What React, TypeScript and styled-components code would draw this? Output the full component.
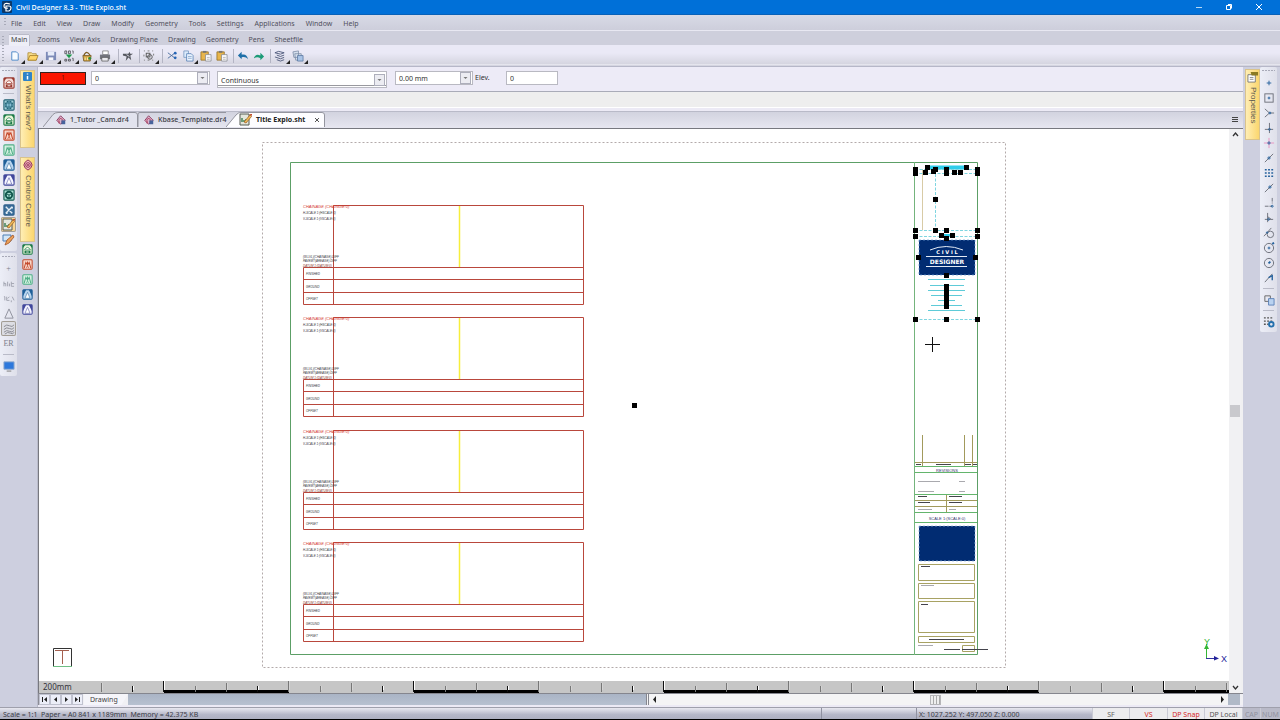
import React from "react";
import styled, { createGlobalStyle, css } from "styled-components";

const Global = createGlobalStyle`
  *, *::before, *::after { box-sizing: border-box; }
  body { margin: 0; background: #000; font-family: "Noto Sans", "Open Sans", sans-serif; font-size: 7px; line-height: 10px; color: #3c3c44; }
  button, input, select { font: inherit; color: inherit; margin: 0; padding: 0; border: 0; background: none; border-radius: 0; outline: none; }
  svg { display: block; flex: none; }
`;

const Window = styled.div`
  display: flex; flex-direction: column; height: 100vh; padding-bottom: 1px; background: #000;
`;
const TitleBar = styled.header`
  display: flex; align-items: center; height: 15px; flex: none; padding: 0 6px 0 2px;
  background: #0070d8; color: #fff; border-bottom: 1px solid #0861b8;
`;
const AppTitle = styled.h1`margin: 0 auto 0 4px; padding-top: 1px; font-size: 7px; font-weight: 500; line-height: 12px;`;
const WindowButton = styled.button`width: 30px; height: 14px; display: grid; place-items: center;`;

const MenuBar = styled.nav`
  display: flex; align-items: center; flex: none; height: 16px; padding-left: 4px;
  background: linear-gradient(#d8dae6, #cdcedb); border-bottom: 1px solid #e8e8f2;
`;
const MenuItem = styled.button`height: 14px; margin-right: 1px; padding: 2px 5px 0; color: #50505c; white-space: nowrap;`;
const HGrip = styled.span<{ $h: number }>`
  width: 2px; height: ${p => p.$h}px; flex: none;
  background: repeating-linear-gradient(#a8aab8 0 1px, transparent 1px 3px);
`;
const VGrip = styled.span`
  height: 1px; width: 13px; margin: 3px auto 4px; flex: none;
  background: repeating-linear-gradient(90deg, #a8aab8 0 2px, transparent 2px 3px);
`;

const Ribbon = styled.div`
  display: grid; grid-template-columns: 6px 1fr; flex: none; height: 36px; align-items: center;
  background: linear-gradient(#cecfdc 0 14px, #eae9f6 14px 22px, #d5d5e0 33px, #f4f4fa 34px, #b6b7c8 35px);
  padding-left: 2px;
`;
const RibbonTabs = styled.div`display: flex; height: 14px; gap: 6px; padding-left: 1px; align-items: flex-end;`;
const RibbonTab = styled.button<{ $on?: boolean }>`
  height: 11px; padding: 0 2px; color: #50505c; white-space: nowrap;
  ${p => p.$on && css`background: #eeeef7; box-shadow: 0 -1px #b9bac8, 1px 0 #b9bac8; color: #444; `}
`;
const Tools = styled.div`display: flex; align-items: center; height: 20px; margin-bottom: 1px;`;
const ToolButton = styled.button<{ $menu?: boolean }>`
  width: ${p => (p.$menu ? 18 : 16)}px; height: 18px; padding-left: 1px; position: relative; flex: none;
  ${p => p.$menu && css`
    &::after { content: ""; position: absolute; right: 1px; bottom: 1px; border: 2px solid; border-color: transparent #222 #222 transparent; }
  `}
`;
const ToolRule = styled.span`width: 1px; height: 14px; margin: 0 2px; background: #b4b5c4;`;

const Body = styled.div`display: flex; flex: 1; min-height: 0; background: #cdcfdf;`;
const SideColumn = styled.div<{ $w: number; $end?: boolean }>`
  width: ${p => p.$w}px; flex: none; display: flex; flex-direction: column;
  align-items: ${p => (p.$end ? "flex-end" : "flex-start")}; background: #cdcfdf;
`;
const IconStrip = styled.div`
  width: 17px; display: flex; flex-direction: column; align-items: center;
  background: linear-gradient(90deg, #eceef7, #dfe0ea); border-radius: 2px;
  & + & { margin-top: 2px; }
`;
const StripButton = styled.button<{ $on?: string }>`
  width: 15px; height: 15px; flex: none; display: grid; place-items: center; color: #7c7f8c;
  font-family: "Liberation Serif", serif; font-size: 8px;
  ${p => p.$on && css`background: ${p.$on}; box-shadow: inset 0 0 0 1px #a29d95; border-radius: 2px;`}
`;
const StripRule = styled.span`width: 11px; height: 1px; margin: 3px 0; background: #b9bbc8; flex: none;`;
const DockTab = styled.button<{ $h: number }>`
  width: 15px; height: ${p => p.$h}px; flex: none; display: flex; flex-direction: column; align-items: center; gap: 4px;
  padding-top: 1px; background: linear-gradient(90deg, #ffeeb4, #fbd66e); border: 1px solid #d9c38c;
  color: #5c5a50;
  span { writing-mode: vertical-rl; font-family: "Liberation Sans", sans-serif; font-size: 8px; line-height: 10px; white-space: nowrap; }
`;
const DockGap = styled.span<{ $h: number }>`height: ${p => p.$h}px; flex: none;`;

const Center = styled.main`flex: 1; min-width: 0; display: flex; flex-direction: column; border-left: 1px solid #b9bbca; background: #eceaf5;`;
const PropertyBar = styled.form`
  display: flex; align-items: center; height: 25px; flex: none; padding-left: 2px; background: #edebf7;
  border-bottom: 1px solid #a9abb8; color: #333;
`;
const ColourButton = styled.button`width: 46px; height: 13px; background: #fb1500; border: 1px solid #33201c; color: #7a1408; margin-bottom: 2px;`;
const Picker = styled.span<{ $w: number; $ml: number; $low?: boolean }>`
  display: grid; grid-template-columns: 1fr 12px; align-items: center; width: ${p => p.$w}px; height: ${p => (p.$low ? 17 : 14)}px;
  margin-left: ${p => p.$ml}px; margin-top: ${p => (p.$low ? 1 : 0)}px; margin-bottom: ${p => (p.$low ? 0 : 2)}px;
  background: #fff; border: 1px solid #b9b9c2;
  select { appearance: none; height: 12px; line-height: 12px; padding: 1px 0 0 3px; grid-row: 1; grid-column: 1 / 3; width: 100%;
    ${p => p.$low && css`border-bottom: 1px solid #99999f;`} }
  svg { grid-row: 1; grid-column: 2; pointer-events: none; }
`;
const ElevLabel = styled.label`margin: 0 0 2px 2px; width: 31px;`;
const ElevInput = styled.input`width: 52px; height: 14px; margin-bottom: 2px; padding-left: 3px; background: #fff; border: 1px solid #b9b9c2;`;
const InfoBar = styled.div`height: 16px; flex: none; margin-bottom: 3px; background: #eeeeee; border-bottom: 1px solid #fff;`;

const DocTabs = styled.div`
  display: flex; height: 18px; flex: none; align-items: flex-end; padding: 0 4px 1px 5px; font-family: "Open Sans", sans-serif;
  background: linear-gradient(#d2d3df, #e6e6f0); border-top: 1px solid #b9bac8; border-bottom: 1px solid #77787f;
`;
const DocTab = styled.button<{ $w: number; $pad: number; $on?: boolean }>`
  position: relative; width: ${p => p.$w}px; height: 15px; display: flex; align-items: center; gap: 4px; padding-left: ${p => p.$pad}px; white-space: nowrap;
  font-weight: ${p => (p.$on ? 700 : 600)}; color: ${p => (p.$on ? "#222" : "#44444c")};
  > svg:first-child { position: absolute; inset: 0; }
  > *:not(:first-child) { position: relative; }
  > span { padding-top: 1px; }
`;
const TabsMenu = styled.button`margin: 0 0 4px auto;`;

const CanvasArea = styled.div`
  flex: 1; min-height: 0; display: grid; grid-template-columns: 1fr 12px; grid-template-rows: 1fr 12px;
  border-left: 1px solid #77787f; padding-right: 2px; background: #f0f0f2;
`;
const Drawing = styled.svg`width: 100%; height: 100%; min-height: 0; background: #fff; font-family: "Liberation Sans", sans-serif;`;
const VScroll = styled.div`grid-row: 1 / 3; grid-column: 2; display: flex; flex-direction: column; justify-content: space-between; align-items: center; background: #f1f1f3;`;
const Arrow = styled.button`width: 11px; height: 11px; display: grid; place-items: center; flex: none;`;
const VThumb = styled.span`width: 10px; height: 12px; background: #c9c9cd; flex: none;`;
const Ruler = styled.svg`width: 100%; height: 12px; background: #c6c6c6;`;

const SheetBar = styled.div`
  display: flex; height: 12px; flex: none; background: #f0f0f4; border-left: 1px solid #8b8c96; border-top: 1px solid #85868e;
`;
const SheetNav = styled.button`width: 11px; height: 11px; display: grid; place-items: center; background: #eceef8; border: 1px solid #c0c2cf;`;
const SheetTab = styled.button`
  width: 44px; height: 11px; margin-left: 1px; text-align: left; padding-left: 6px; background: #f5f5fa; clip-path: polygon(0 0, 100% 0, 85% 100%, 0 100%); color: #444;
`;
const SheetSpace = styled.div`flex: 518; background: linear-gradient(#aab4c5, #b7c1d0);`;
const HScroll = styled.div`flex: 580; display: flex; align-items: center; border-left: 3px double #85868e; background: #f4f4f5;`;
const Track = styled.span<{ $part: number }>`flex: ${p => p.$part};`;
const HThumb = styled.span`width: 11px; height: 10px; border: 1px solid #b5b5b8; background: repeating-linear-gradient(90deg, #eee 0 2px, #aaa 2px 3px);`;
const Corner = styled.span`width: 12px; background: #b0b9c7; margin-right: 3px;`;

const StatusBar = styled.footer`
  display: flex; align-items: center; height: 12px; flex: none; padding-left: 3px; color: #3a3b46; white-space: nowrap;
  background: linear-gradient(#e8e8f0, #b5b7c8 60%, #adafc0); border-top: 1px solid #9fa0ac;
`;
const StatusPane = styled.span<{ $w?: number }>`
  ${p => (p.$w ? css`width: ${p.$w}px; padding-left: 2px; border-left: 1px solid #8f91a0;` : css`flex: 1;`)}
  height: 11px; line-height: 13px; flex-shrink: 0;
`;
const StatusToggle = styled.button<{ $w: number; $tone: string; $dim?: boolean }>`
  width: ${p => p.$w}px; height: 11px; padding-top: 1px; flex: none; overflow: hidden; color: ${p => p.$tone}; line-height: 12px;
  background: ${p => (p.$dim ? "#b9bac8" : "#ececee")}; border-left: 1px solid #c9cad4;
`;

/* ---------- icons ---------- */
const Ico = ({ children, s = 13 }: { children: React.ReactNode; s?: number }) => (
  <svg width={s} height={s} viewBox="0 0 13 13" fill="none" aria-hidden="true">{children}</svg>
);

const toolIcons: Record<string, React.ReactNode> = {
  New: <path d="M3 2h5l2 2v7H3z" fill="#f6fbff" stroke="#4a86c5" />,
  Open: <><path d="M1 3h4l1 1h4v7H1z" fill="#f7dd8c" stroke="#a8842c" strokeWidth=".8" /><path d="M1 11l2-5h9l-2 5z" fill="#ffd668" stroke="#9c7620" strokeWidth=".8" /></>,
  Save: <><path d="M1 2h11v9H1z" fill="#7d8bb8" /><path d="M3 2h7v4H3z" fill="#e7ecf9" /><path d="M4 8h5v3H4z" fill="#f8f8fb" /></>,
  Export: <><path d="M2 1h2v3H2zM6 1h2v3H6zM10 1h1v3M2 10h2v2H2zM6 10h2v2H6zM10 9h1v3" stroke="#3b3b40" strokeWidth=".8" /><path d="M3 5h7L6.500 9z" fill="#1d9a4b" /></>,
  Package: <><path d="M2 6h9l-1 6H3z" fill="#d0a444" stroke="#6b4f1b" strokeWidth=".8" /><path d="M3 6q3-7 7 0" stroke="#7c5a20" strokeWidth="1.300" /><path d="M4.500 8v3M7 8v3" stroke="#fff0b5" /><circle cx="9.500" cy="9" r="1.500" fill="#2c8e43" /></>,
  Print: <><path d="M4 1h6v4H4z" fill="#fff" stroke="#666" strokeWidth=".7" /><path d="M1 5h11v5H1z" fill="#73757d" /><path d="M3 8h7v4H3z" fill="#e9e9ed" stroke="#444" strokeWidth=".7" /></>,
  Find: <><path d="M1 4h6l1-2 1 2h3l-3 2 1 5-3-3-3 4 1-5-4-1z" fill="#55575f" /><path d="M5 5l3 2" stroke="#e3e3ee" /></>,
  Group: <><rect x="3.500" y="3.500" width="4" height="4" stroke="#555" /><circle cx="7.500" cy="7.500" r="2.500" stroke="#555" /><path d="M1 1h1M5 1h2M10 1h1M1 11h1M5 11h2M10 11h1M1 5v2M11.500 4v2" stroke="#777" /></>,
  Cut: <><path d="M2 3l8 6M2 9l8-6" stroke="#4a6d9e" /><circle cx="10" cy="3.500" r="1.500" fill="#2765b5" /><circle cx="10" cy="8.500" r="1.500" fill="#2765b5" /></>,
  Copy: <><path d="M2 1h5v7H2z" fill="#dcebfb" stroke="#6e91bd" strokeWidth=".8" /><path d="M5 4h5l2 2v6H5z" fill="#eaf4ff" stroke="#4b78b0" strokeWidth=".8" /><path d="M6.500 7h4M6.500 9h4" stroke="#6e91bd" strokeWidth=".7" /></>,
  Paste: <><path d="M1 2h8v9H1z" fill="#e8b54b" stroke="#8f6a20" strokeWidth=".8" /><path d="M3 1h4v2H3z" fill="#777" /><path d="M6 5h6v7H6z" fill="#fbfbfd" stroke="#85878f" strokeWidth=".8" /><path d="M7.500 8h3M7.500 10h3" stroke="#999" strokeWidth=".7" /></>,
  Undo: <path d="M1 6l4-4v3c4-1 6 1 7 5-2-2-4-3-7-2v2z" fill="#1f6fa8" />,
  Redo: <path d="M12 7L8 3v3c-4-2-6 0-7 3 2-1 4-2 7 0v2z" fill="#1c9b78" />,
  Layers: <><path d="M5 1.500L11 3 7 4.500 1 3zM3 5.500l4 1.500 4-1.500M1 7.500l6 2 4-1.500M3 10.500L7 12l4-1.500" stroke="#4f5a7c" /></>,
  Sheets: <><path d="M1 2l6-1v7H2zM3 4h7v7H4z" fill="#d6e0ee" stroke="#7888a3" strokeWidth=".8" /><path d="M6 6h6v6H6z" fill="#a9c4e6" stroke="#54739f" strokeWidth=".8" /></>,
};

const Badge = ({ c, bg, k, s = 12 }: { c: string; bg: string; k: number; s?: number }) => (
  <Ico s={s}>
    <rect x="1" y="1" width="11" height="11" rx="1" fill={bg} stroke={c} strokeWidth="1.200" />
    {k === 0 && <><circle cx="6.500" cy="6.500" r="4.500" fill={c} /><path d="M2 6.500h9M6.500 2v9M4 3q2 3.500 0 7M9 3q-2 3.500 0 7" stroke="#9ad2e8" strokeWidth=".8" /></>}
    {k === 1 && <><path d="M1 1h3L1 5zM12 1H9l3 4z" fill={c} /><path d="M3 7q3.500-6 7 0z" fill="#fff" stroke={c} strokeWidth=".8" /><path d="M3 8h7v3H3z" fill={c} /><path d="M5 9.500h3" stroke="#fff" /></>}
    {k === 2 && <><path d="M2.500 11L4.500 4l2 3V3M10.500 11L8.500 4l-2 3" stroke={c} strokeWidth="1.200" /><path d="M5 11l1.500-3L8 11" stroke={c} strokeWidth=".8" /></>}
    {k === 3 && <><path d="M1 1h4L1 9zM12 1H8l4 8z" fill={c} /><path d="M3.500 11L6.500 4l3 7z" fill="#fff" stroke={c} strokeWidth=".6" /></>}
    {k === 4 && <><circle cx="6.500" cy="6.500" r="3.500" stroke={c} strokeWidth="2" /><path d="M6.500 6.500v4M6.500 6.500L3 5M6.500 6.500L10 5" stroke={c} /></>}
    {k === 5 && <path d="M3 10l7-7M3 3l7 7M3 10h2M10 3v2" stroke="#e4edf5" strokeWidth="1.500" />}
  </Ico>
);
const Edit = () => (
  <Ico s={13}><path d="M1 1h9v11H1z" fill="#e3e6dc" stroke="#545a52" /><path d="M3 9V5M5 9V7M7 9V6" stroke="#1b6d38" strokeWidth="1.200" /><path d="M5 9l6-7 1.500 1.500L7 10z" fill="#f0bd59" stroke="#99541e" strokeWidth=".7" /><path d="M10 1h3v2" fill="#c4492a" /></Ico>
);
const Sketch = () => (
  <Ico s={13}><path d="M1 2h8v6H1z" fill="#d3e6f7" stroke="#4d7fb4" /><path d="M3 12l2-5 6-5 1 2-5 6z" fill="#e9a05a" stroke="#a45422" strokeWidth=".8" /></Ico>
);
const House = () => (
  <Ico s={10}><path d="M1 7l5-6 6 6-6 5z" fill="#d8b4cc" stroke="#8d3b62" strokeWidth="1.200" /><path d="M3 7l3-3 3 3M4 7v4M8 7v4" stroke="#b03050" strokeWidth="1.200" /><path d="M7 7h5v5H7z" fill="#47639c" /></Ico>
);
const Spiral = () => (
  <Ico s={12}><path d="M6.500 1q4 2 4.500 5.500-.5 3.500-4.500 5.500-4-2-4.500-5.500Q2.500 3 6.500 1z" fill="#f5b7bd" stroke="#8d2d56" /><circle cx="6.500" cy="6.500" r="2.500" stroke="#8d2d56" /><circle cx="6.500" cy="6.500" r="1" fill="#8d2d56" /></Ico>
);

const mini: Array<[string, string, number]> = [["#1c7a48", "#e9f6d8", 1], ["#c44a2c", "#f8d8cc", 2], ["#4fae86", "#d5f1e2", 2], ["#1f5f98", "#b8d4ee", 3], ["#41479c", "#f3f3ff", 3]];

const snaps: Array<[string, React.ReactNode]> = [
  ["Point", <path d="M6.500 4v5M4 6.500h5" />],
  ["Node", <><rect x="2" y="2" width="9" height="9" stroke="#6b6f78" /><circle cx="6.500" cy="6.500" r="1" /></>],
  ["Intersection", <><path d="M2 2l5 4.500L2 11M7 6.500h5" stroke="#6b6f78" /><circle cx="7.500" cy="6.500" r="1" /></>],
  ["Perpendicular", <><path d="M7 1v11M2 8h9" stroke="#6b6f78" /><circle cx="7" cy="8" r="1" /></>],
  ["Cross", <><path d="M6.500 1v11M1 6.500h11" stroke="#e892c0" /><circle cx="6.500" cy="6.500" r="1.200" /></>],
  ["Midpoint", <><path d="M2 11l9-9" stroke="#6b6f78" /><circle cx="6.500" cy="6.500" r="1.200" /></>],
  ["Grid", <path d="M2 3h9M2 6.500h9M2 10h9" strokeDasharray="2 1.500" strokeWidth="1.800" />],
  ["Nearest", <><path d="M2 11l9-9" stroke="#6b6f78" /><circle cx="7.500" cy="5.500" r="1.200" /></>],
  ["Corner", <><path d="M2 10h8M10 1v6" stroke="#6b6f78" strokeDasharray="4 1" /><circle cx="10" cy="10" r="1" /></>],
  ["Base", <><path d="M5 1v10M2 8h9M5 5l4 3" stroke="#6b6f78" /><circle cx="6" cy="8" r="1" /></>],
  ["Tangent", <><circle cx="8" cy="8" r="3.500" stroke="#6b6f78" /><path d="M1 10l8-9" stroke="#6b6f78" /><circle cx="4.500" cy="6" r=".8" /></>],
  ["Quadrant", <><circle cx="6.500" cy="6.500" r="5" stroke="#6b6f78" /><circle cx="6.500" cy="6.500" r="1" /><path d="M10 2l2-1" strokeWidth="2" /></>],
  ["Centre", <><circle cx="6.500" cy="6.500" r="5" stroke="#6b6f78" /><path d="M6 7l2-2" strokeWidth="2" /></>],
  ["Line end", <><path d="M2 11l8-9" stroke="#6b6f78" /><path d="M6 6l4-2v5" strokeWidth="1.500" /></>],
];

/* ---------- drawing ---------- */
const Profile = ({ y }: { y: number }) => (
  <g>
    <path d={`M459.500 ${y}v62`} stroke="#f7ee3c" strokeWidth="1.500" />
    <path d={`M333.500 ${y}H583.500V${y + 99}H303.500V${y + 62}H583.500M333.500 ${y}V${y + 99}M303.500 ${y + 74}H583.500M303.500 ${y + 87}H583.500`} stroke="#b9473c" />
    <g fontStyle="italic" fontSize="4" fill="#d43a30">
      <text x="303" y={y + 2}>CHAINAGE (CHAINGE:0)</text>
    </g>
    <g fontStyle="italic" fontSize="3" fill="#33333a">
      <text x="303" y={y + 8}>H-SCALE 1:(HSCALE:0)</text>
      <text x="303" y={y + 14}>V-SCALE 1:(VSCALE:0)</text>
      <text x="303" y={y + 52}>(W.LVL)(CHAINAGE).DIFF</text>
      <text x="303" y={y + 56}>PAVEMT(AREAGE) DIFF</text>
      <text x="303" y={y + 61} fill="#80332d">DATUM 1:(DATUM:0)</text>
      <text x="306" y={y + 69}>FINISHED</text>
      <text x="306" y={y + 82}>GROUND</text>
      <text x="306" y={y + 94}>OFFSET</text>
    </g>
  </g>
);

const handles = [[915, 169], [977, 169], [915, 173], [977, 173], [946, 169], [946, 173], [927, 167], [966, 167], [925, 172], [933, 171], [935, 169], [954, 172], [960, 172], [935, 199], [935, 230], [946, 230], [915, 230], [977, 230], [915, 236], [977, 236], [941, 235], [952, 235], [946, 238], [918, 257], [975, 257], [946, 275], [946, 286], [946, 291], [946, 296], [946, 301], [946, 306], [915, 319], [946, 319], [977, 319], [634, 405]];
const addressLines = [[928, 965, 279], [930, 964, 285], [928, 965, 290], [931, 962, 295], [938, 955, 300], [931, 962, 305], [928, 965, 310]];
const notes = [[916, 921, 464], [936, 951, 464], [965, 971, 464], [973, 977, 464], [918, 927, 496], [949, 962, 496], [918, 930, 502], [949, 962, 502], [921, 930, 566], [921, 928, 604], [929, 964, 639], [944, 960, 649], [962, 988, 649]];
const faint = [[918, 940, 481], [959, 965, 481], [918, 934, 491], [959, 965, 491], [918, 932, 509], [949, 956, 509], [921, 934, 585], [918, 933, 645]];
const lines = (list: number[][]) => list.map(([a, b, y]) => `M${a} ${y}.500H${b}`).join("");

const Sheet = () => (
  <Drawing viewBox="39 129 1190 552" role="img" aria-label="Title sheet drawing" fill="none">
    <rect x="262.500" y="142.500" width="743" height="525" stroke="#b3aaaa" strokeDasharray="2 2" />
    <path d="M290.500 162.500H977.500V654.500H290.500z" stroke="#5c9f66" />
    <path d="M914.500 162V655" stroke="#74b47c" />
    {[205, 317, 430, 542].map(y => <Profile key={y} y={y + 0.5} />)}
    <path d="M922.500 169V230" stroke="#d8cba6" />
    <path d="M928 167.500H967" stroke="#2fcdea" strokeWidth="4" />
    <path d="M943 235.500H951" stroke="#2fcdea" strokeWidth="3" />
    <path d="M915 169.500H978M915 173.500H978M915 230.500H978M915 236.500H978M915 319.500H978M935.500 174V230" stroke="#7fd5e0" strokeDasharray="3 1.500" />
    <rect x="919" y="240" width="56" height="35" fill="#012c72" stroke="#6d9fd4" strokeDasharray="2 2" strokeWidth=".7" />
    <path d="M930 250q16-7 33 0M926 256.500H967M926 266.500H967" stroke="#e3eaf5" />
    <g fill="#fff" fontFamily="DejaVu Sans" fontWeight="700" textAnchor="middle">
      <text x="947" y="254" fontSize="5">C I V I L</text>
      <text x="947" y="264" fontSize="6">DESIGNER</text>
    </g>
    <path d={lines(addressLines)} stroke="#5ecbd8" />
    <path d="M925 344.500H940M932.500 337V352" stroke="#111" />
    <path d="M922.500 435V466M964.500 435V466M972.500 435V466M915 462.500H977M915 500.500H977M915 506.500H977M946.500 494V512" stroke="#a29a5c" />
    <path d="M915 466.500H977M915 472.500H977M915 494.500H977M915 512.500H977M915 522.500H977" stroke="#63b56c" />
    <path d="M918.500 564.500h56v16h-56zM918.500 583.500h56v15h-56zM918.500 601.500h56v31h-56zM918.500 636.500h56v6h-56zM962.500 645.500h12v6h-12z" stroke="#a8a263" />
    <path d={lines(notes)} stroke="#44444c" />
    <path d={lines(faint)} stroke="#a9a9ae" />
    <rect x="919" y="526" width="56" height="35" fill="#012c72" stroke="#8fb5dd" strokeDasharray="2 2" strokeWidth=".7" />
    <g fill="#34346c" fontSize="4" textAnchor="middle">
      <text x="947" y="472">REVISIONS</text>
      <text x="947" y="520">SCALE 1:(SCALE:0)</text>
    </g>
    {handles.map(([x, y], i) => <rect key={i} x={x - 2} y={y - 2} width="5" height="5" fill="#000" />)}
    <path d="M53.500 667V648.500H71.500V667" stroke="#333" />
    <path d="M53 666.500H72" stroke="#6fbf84" />
    <path d="M55 650.500H69M62.500 651V664" stroke="#a5604f" />
    <path d="M1206.500 658V644" stroke="#35b535" />
    <path d="M1204 649l2.500-5 2.500 5z" fill="#35b535" />
    <path d="M1206 658.500H1216" stroke="#3333a0" />
    <path d="M1214 656l5 2.500-5 2z" fill="#22229a" />
    <text x="1204" y="645" fontSize="9" fill="#35b535">Y</text>
    <text x="1221" y="662" fontSize="9" fill="#22229a">X</text>
  </Drawing>
);

const RulerScale = () => (
  <Ruler viewBox="39 681 1190 12" preserveAspectRatio="xMinYMid slice" role="img" aria-label="Scale ruler">
    {[164, 414, 664, 914, 1164].map(x => <rect key={x} x={x} y="690" width="125" height="3" fill="#000" />)}
    {Array.from({ length: 37 }, (_, i) => {
      const x = Math.floor(101.25 + i * 31.25);
      const dark = i % 8 === 2 || i % 4 === 1;
      const top = i % 4 === 2 ? 681 : i % 2 === 0 ? 683 : 686;
      return <g key={i}><rect x={x} y={top} width="1" height={692 - top} fill={dark ? "#111" : "#777"} /><rect x={x + 1} y={top} width="1" height={690 - top} fill={dark ? "#fff" : "#d4d4d4"} /></g>;
    })}
    <text x="43" y="690" fontSize="8" fill="#33333a">200mm</text>
  </Ruler>
);

const DropArrow = () => (
  <svg width="11" height="12" viewBox="0 0 11 12" aria-hidden="true"><rect x=".500" y=".500" width="10" height="11" fill="#ececf2" stroke="#adaebb" /><path d="M3.500 5h4l-2 2z" fill="#777" /></svg>
);
const Chevron = ({ d }: { d: string }) => <svg width="7" height="7" viewBox="0 0 7 7" fill="none" aria-hidden="true"><path d={d} stroke="#333" strokeWidth="1.300" /></svg>;
const Tri = ({ d }: { d: string }) => <svg width="7" height="7" viewBox="0 0 7 7" aria-hidden="true"><path d={d} fill="#222" /></svg>;

const menus = ["File", "Edit", "View", "Draw", "Modify", "Geometry", "Tools", "Settings", "Applications", "Window", "Help"];
const ribbonTabs = ["Main", "Zooms", "View Axis", "Drawing Plane", "Drawing", "Geometry", "Pens", "Sheetfile"];
const toolRow: Array<[string, boolean] | null> = [
  ["New", true], ["Open", true], ["Save", true], ["Export", true], ["Package", true], ["Print", true], null,
  ["Find", false], null, ["Group", true], null, ["Cut", false], ["Copy", true], ["Paste", false], ["Paste", false], null,
  ["Undo", false], ["Redo", false], null, ["Layers", true], ["Sheets", true],
];

export default function App() {
  return (
    <Window>
      <Global />
      <TitleBar>
        <svg width="10" height="12" viewBox="0 0 10 12" fill="none" aria-hidden="true"><rect width="10" height="12" rx="1" fill="#0b3767" /><path d="M8 3q-6-2-6 2 0 3 4 2M4 5h3q2 0 2 2t-2 3H4z" stroke="#fff" strokeWidth="1.200" /></svg>
        <AppTitle>Civil Designer 8.3 - Title Explo.sht</AppTitle>
        <WindowButton aria-label="Minimize"><svg width="8" height="8"><path d="M1 4.500h6" stroke="#b5d8f5" /></svg></WindowButton>
        <WindowButton aria-label="Restore"><svg width="8" height="8" fill="none"><path d="M1.500 2.500h4v4h-4zM3 1.500h3.500v4" stroke="#fff" /></svg></WindowButton>
        <WindowButton aria-label="Close"><svg width="8" height="8"><path d="M1 1l6 6M7 1l-6 6" stroke="#fff" /></svg></WindowButton>
      </TitleBar>
      <MenuBar>
        <HGrip $h={9} />
        {menus.map(m => <MenuItem key={m}>{m}</MenuItem>)}
      </MenuBar>
      <Ribbon>
        <HGrip $h={27} />
        <div>
          <RibbonTabs>{ribbonTabs.map((t, i) => <RibbonTab key={t} $on={i === 0}>{t}</RibbonTab>)}</RibbonTabs>
          <Tools>
            {toolRow.map((t, i) => t
              ? <ToolButton key={i} $menu={t[1]} aria-label={t[0]}><Ico s={12}>{toolIcons[t[0]]}</Ico></ToolButton>
              : <ToolRule key={i} />)}
          </Tools>
        </div>
      </Ribbon>
      <Body>
        <SideColumn $w={20}>
          <IconStrip>
            <VGrip />
            <StripButton aria-label="Survey"><Badge c="#9a3a30" bg="#f6ddd8" k={1} /></StripButton>
            <StripRule />
            <StripButton aria-label="World"><Badge c="#1b5d70" bg="#a4d0da" k={0} /></StripButton>
            {mini.map(([c, bg, k], i) => <StripButton key={i} aria-label={`Module ${i + 1}`}><Badge c={c} bg={bg} k={k} /></StripButton>)}
            <StripButton aria-label="Wheel"><Badge c="#11584e" bg="#a9e0d4" k={4} /></StripButton>
            <StripButton aria-label="Utilities"><Badge c="#2d5f8c" bg="#3d6f9c" k={5} /></StripButton>
            <StripButton aria-label="Sheet editor" $on="#f9d795"><Edit /></StripButton>
            <StripButton aria-label="Sketch"><Sketch /></StripButton>
            <DockGap $h={4} />
          </IconStrip>
          <IconStrip>
            <VGrip />
            <StripButton>+</StripButton>
            <StripButton aria-label="Abbreviate"><Ico s={12}><path d="M1 4v5M1 6h2v3M5 4v5M7 6v3M9 4v5M9 6h3M9 9h3" stroke="#a0a2ae" /></Ico></StripButton>
            <StripButton aria-label="Coordinates"><Ico s={12}><path d="M1 4h1v4M4 4v4h3M7 4L5 6M9 8v2M10 4l2 4" stroke="#a0a2ae" /></Ico></StripButton>
            <StripButton aria-label="Triangle"><Ico s={12}><path d="M6.500 1L11 11H2z" stroke="#8c8e9a" /></Ico></StripButton>
            <StripButton aria-label="Contours" $on="#dcdde3"><Ico s={12}><path d="M1 4q3-3 6-1t5-1M1 7q3-3 6-1t5-1M1 10q3-3 6-1t5-1M2 12q3-3 6-1t4-1" stroke="#85878f" /></Ico></StripButton>
            <StripButton>ER</StripButton>
            <StripRule />
            <StripButton aria-label="Screen"><Ico s={12}><path d="M1 2h11v8H1z" fill="#2d78dc" stroke="#8fa9cc" /><path d="M4 12h5" stroke="#777" /></Ico></StripButton>
            <DockGap $h={3} />
          </IconStrip>
        </SideColumn>
        <SideColumn $w={17}>
          <DockGap $h={3} />
          <DockTab $h={78}>
            <svg width="9" height="9" viewBox="0 0 9 9" aria-hidden="true"><rect width="9" height="9" rx="1" fill="#2f83c8" /><path d="M4.500 1.500v1M4.500 4v3.500" stroke="#fff" strokeWidth="1.500" /></svg>
            <span>What's new?</span>
          </DockTab>
          <DockGap $h={9} />
          <DockTab $h={85}><Spiral /><span>Control Centre</span></DockTab>
          {mini.map(([c, bg, k], i) => <StripButton key={i} aria-label={`Panel ${i + 1}`}><Badge c={c} bg={bg} k={k} s={11} /></StripButton>)}
        </SideColumn>
        <Center>
          <PropertyBar onSubmit={e => e.preventDefault()}>
            <ColourButton type="button">1</ColourButton>
            <Picker $w={119} $ml={5}><select aria-label="Layer"><option>0</option></select><DropArrow /></Picker>
            <Picker $w={170} $ml={7} $low><select aria-label="Line type"><option>Continuous</option></select><DropArrow /></Picker>
            <Picker $w={78} $ml={8}><select aria-label="Line width"><option>0.00 mm</option></select><DropArrow /></Picker>
            <ElevLabel htmlFor="elev">Elev.</ElevLabel>
            <ElevInput id="elev" defaultValue="0" />
          </PropertyBar>
          <InfoBar />
          <DocTabs>
            <DocTab $w={95} $pad={13}>
              <svg width="97" height="15" fill="none" aria-hidden="true"><path d="M0 15L10 2.500Q12 .500 15 .500H92Q94.500 .500 94.500 3V15" fill="#e2e3ee" stroke="#94959f" /></svg>
              <House /><span>1_Tutor _Cam.dr4</span>
            </DocTab>
            <DocTab $w={88} $pad={6}>
              <svg width="90" height="15" fill="none" aria-hidden="true"><path d="M0 15V2Q0 .500 2 .500H88" stroke="#94959f" /></svg>
              <House /><span>Kbase_Template.dr4</span>
            </DocTab>
            <DocTab $w={99} $pad={13} $on>
              <svg width="99" height="15" fill="none" aria-hidden="true"><path d="M0 15L10 3Q12 .500 15 .500H96Q98.500 .500 98.500 3V15" fill="#fdfdff" stroke="#94959f" /></svg>
              <Edit /><span>Title Explo.sht</span>
              <svg width="12" height="8" aria-hidden="true"><path d="M6 2l4 4M10 2l-4 4" stroke="#555" /></svg>
            </DocTab>
            <TabsMenu aria-label="Open documents"><svg width="7" height="7"><path d="M0 1.500h6M0 3.500h6M0 5.500h6" stroke="#444" /></svg></TabsMenu>
          </DocTabs>
          <CanvasArea>
            <Sheet />
            <VScroll>
              <Arrow aria-label="Scroll up"><Chevron d="M1 5l2.500-3L6 5" /></Arrow>
              <VThumb />
              <Arrow aria-label="Scroll down"><Chevron d="M1 2l2.500 3L6 2" /></Arrow>
            </VScroll>
            <RulerScale />
          </CanvasArea>
          <SheetBar>
            <SheetNav aria-label="First sheet"><Tri d="M1 1h1v5H1zM6 1v5L3 3.500z" /></SheetNav>
            <SheetNav aria-label="Previous sheet"><Tri d="M5 1v5L2 3.500z" /></SheetNav>
            <SheetNav aria-label="Next sheet"><Tri d="M2 1v5l3-2.500z" /></SheetNav>
            <SheetNav aria-label="Last sheet"><Tri d="M5 1h1v5H5zM1 1v5l3-2.500z" /></SheetNav>
            <SheetTab>Drawing</SheetTab>
            <SheetSpace />
            <HScroll>
              <Arrow aria-label="Scroll left"><Tri d="M5 0v7L2 3.500z" /></Arrow>
              <Track $part={269} />
              <HThumb />
              <Track $part={275} />
              <Arrow aria-label="Scroll right"><Tri d="M2 0v7l3-3.500z" /></Arrow>
            </HScroll>
            <Corner />
          </SheetBar>
          <DockGap $h={2} />
        </Center>
        <SideColumn $w={17} $end>
          <DockGap $h={2} />
          <DockTab $h={71}>
            <Ico s={12}><path d="M1 4h8v8H1z" fill="#fff" stroke="#777" /><path d="M4 1h8v4H5z" fill="#8b7a22" /><path d="M3 7h4M3 9h4" stroke="#888" /></Ico>
            <span>Properties</span>
          </DockTab>
        </SideColumn>
        <SideColumn $w={20}>
          <IconStrip>
            <VGrip />
            {snaps.map(([name, art]) => <StripButton key={name} aria-label={name}><svg width="12" height="12" viewBox="0 0 13 13" fill="none" stroke="#24619c" aria-hidden="true">{art}</svg></StripButton>)}
            <StripRule />
            <StripButton aria-label="Snap copy"><Ico s={12}><path d="M2 2h6v6H2z" stroke="#666" /><path d="M6 5h6v7H6z" fill="#b9d2f0" stroke="#5d82b8" /></Ico></StripButton>
            <StripRule />
            <StripButton aria-label="Snap settings"><Ico s={12}><path d="M1 2h9M1 5.500h9M1 9h5" stroke="#555" strokeDasharray="2 1.500" strokeWidth="1.500" /><circle cx="9" cy="9" r="2.500" stroke="#2470ad" strokeWidth="2" /></Ico></StripButton>
            <DockGap $h={3} />
          </IconStrip>
        </SideColumn>
      </Body>
      <StatusBar>
        <StatusPane>Scale = 1:1&nbsp; Paper = A0 841 x 1189mm&nbsp; Memory = 42.375 KB</StatusPane>
        <StatusPane $w={95} />
        <StatusPane $w={176}>X: 1027.252 Y: 497.050 Z: 0.000</StatusPane>
        <StatusToggle $w={37} $tone="#666">SF</StatusToggle>
        <StatusToggle $w={38} $tone="#d42a2a">VS</StatusToggle>
        <StatusToggle $w={37} $tone="#d42a2a">DP Snap</StatusToggle>
        <StatusToggle $w={38} $tone="#555">DP Local</StatusToggle>
        <StatusToggle $w={18} $tone="#9092a0" $dim>CAP</StatusToggle>
        <StatusToggle $w={20} $tone="#9092a0" $dim>NUM</StatusToggle>
      </StatusBar>
    </Window>
  );
}
